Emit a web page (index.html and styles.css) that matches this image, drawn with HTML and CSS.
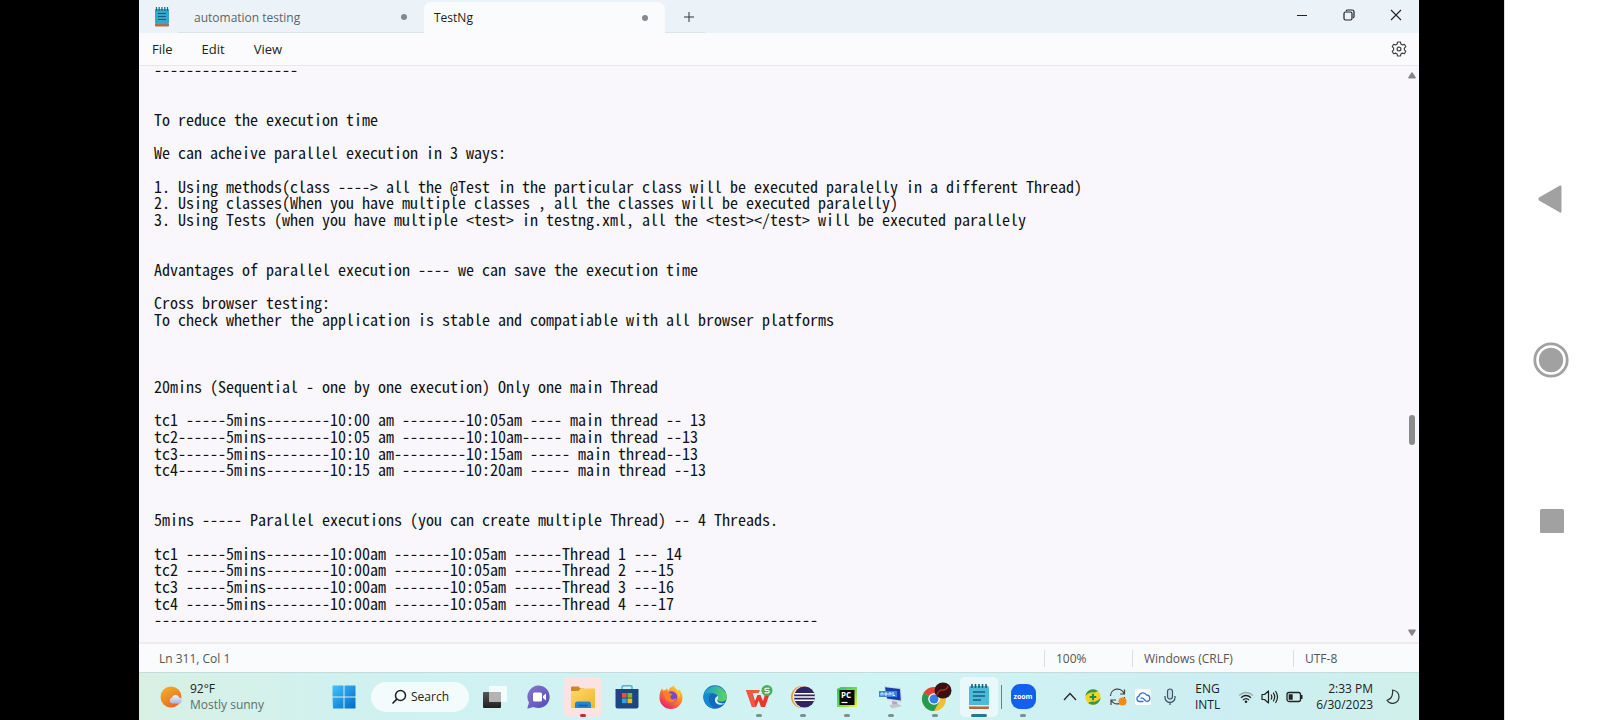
FILE: index.html
```html
<!DOCTYPE html>
<html lang="en">
<head>
<meta charset="utf-8">
<title>TestNg - Notepad</title>
<link rel="stylesheet" href="styles.css">
</head>
<body>
<div class="screen">
  <main class="desktop">
    <section class="notepad" aria-label="Notepad">
      <header class="titlebar">
        <svg class="app-icon" viewBox="0 0 14 20" aria-hidden="true"><rect x="0" y="2" width="14" height="15" rx="1" fill="#35a7ca"/><path d="M1.500 0v4M4.200 0v4M7 0v4M9.800 0v4M12.500 0v4" stroke="#176b8c" stroke-width="1.200"/><path d="M3 6.500h8M3 9.500h8M3 12.500h8" stroke="#135f80" stroke-width="1.200"/><path d="M0 17h14v1.500a1 1 0 0 1-1 1H1a1 1 0 0 1-1-1z" fill="#a5714f"/></svg>
        <div class="tabs" role="tablist">
          <button class="tab" role="tab" aria-selected="false"><span>automation testing</span><i class="dot"></i></button>
          <button class="tab tab-active" role="tab" aria-selected="true"><span>TestNg</span><i class="dot"></i></button>
          <button class="new-tab" aria-label="New tab"><svg width="12" height="12" viewBox="0 0 12 12"><path d="M6 1v10M1 6h10" stroke="#333" fill="none"/></svg></button>
        </div>
        <div class="window-buttons">
          <button aria-label="Minimize"><svg width="12" height="12" viewBox="0 0 12 12"><path d="M1 6.500h10" stroke="#222" fill="none"/></svg></button>
          <button aria-label="Restore"><svg width="12" height="12" viewBox="0 0 12 12"><g stroke="#222" fill="none" stroke-width="1.200"><rect x="1" y="3" width="8" height="8" rx="1.500"/><path d="M3 1.800Q3.600 1 4.500 1H9a2 2 0 0 1 2 2v4.500q0 .9-.8 1.500"/></g></svg></button>
          <button aria-label="Close"><svg width="12" height="12" viewBox="0 0 12 12"><path d="M1 1l10 10M11 1L1 11" stroke="#222" stroke-width="1.100" fill="none"/></svg></button>
        </div>
      </header>
      <nav class="menubar">
        <button>File</button><button>Edit</button><button>View</button>
        <button class="settings" aria-label="Settings"><svg width="16" height="16" viewBox="0 0 16 16"><g fill="none" stroke="#444" stroke-width="1.200" stroke-linejoin="round"><path d="M6.600 1h2.800l.5 2 1.500.9 2-.6 1.400 2.400L13.400 7.100v1.800l1.400 1.400-1.400 2.400-2-.6-1.500.9-.5 2H6.600l-.5-2-1.500-.9-2 .6-1.400-2.400 1.400-1.400V7.100L1.200 5.700l1.400-2.400 2 .6L6.100 3z"/><circle cx="8" cy="8" r="1.900"/></g></svg></button>
      </nav>
      <div class="editor">
        <div class="document" role="textbox" aria-multiline="true" aria-label="Document text" contenteditable="true" spellcheck="false"><p>------------------</p><p></p><p></p><p>To reduce the execution time</p><p></p><p>We can acheive parallel execution in 3 ways:</p><p></p><p>1. Using methods(class ----&gt; all the @Test in the particular class will be executed paralelly in a different Thread)</p><p>2. Using classes(When you have multiple classes , all the classes will be executed paralelly)</p><p>3. Using Tests (when you have multiple &lt;test&gt; in testng.xml, all the &lt;test&gt;&lt;/test&gt; will be executed parallely</p><p></p><p></p><p>Advantages of parallel execution ---- we can save the execution time</p><p></p><p>Cross browser testing:</p><p>To check whether the application is stable and compatiable with all browser platforms</p><p></p><p></p><p></p><p>20mins (Sequential - one by one execution) Only one main Thread</p><p></p><p>tc1 -----5mins--------10:00 am --------10:05am ---- main thread -- 13</p><p>tc2------5mins--------10:05 am --------10:10am----- main thread --13</p><p>tc3------5mins--------10:10 am---------10:15am ----- main thread--13</p><p>tc4------5mins--------10:15 am --------10:20am ----- main thread --13</p><p></p><p></p><p>5mins ----- Parallel executions (you can create multiple Thread) -- 4 Threads.</p><p></p><p>tc1 -----5mins--------10:00am -------10:05am ------Thread 1 --- 14</p><p>tc2 -----5mins--------10:00am -------10:05am ------Thread 2 ---15</p><p>tc3 -----5mins--------10:00am -------10:05am ------Thread 3 ---16</p><p>tc4 -----5mins--------10:00am -------10:05am ------Thread 4 ---17</p><p>-----------------------------------------------------------------------------------</p></div>
        <div class="scrollbar" aria-hidden="true">
          <svg width="8" height="7" viewBox="0 0 8 7"><path d="M3.200.8Q4-.2 4.800.8L7.800 5.500Q8 6.500 7 6.500H1Q0 6.500.2 5.500z" fill="#858585"/></svg>
          <i class="track-before"></i><i class="thumb"></i><i class="track-after"></i>
          <svg width="8" height="7" viewBox="0 0 8 7"><path d="M3.200 6.200Q4 7.200 4.800 6.200L7.800 1.500Q8 .5 7 .5H1Q0 .5.2 1.500z" fill="#858585"/></svg>
        </div>
      </div>
      <footer class="statusbar">
        <span class="position">Ln 311, Col 1</span><span class="zoom-level">100%</span><span class="line-ending">Windows (CRLF)</span><span class="encoding">UTF-8</span>
      </footer>
    </section>

    <footer class="taskbar">
      <button class="weather">
        <svg width="24" height="24" viewBox="0 0 24 24"><defs><linearGradient id="sun" x1="0" y1="0" x2=".6" y2="1"><stop offset="0" stop-color="#f2b52c"/><stop offset="1" stop-color="#ea6a1e"/></linearGradient><linearGradient id="cloud" x1="0" y1="0" x2="0" y2="1"><stop offset="0" stop-color="#eef2ff"/><stop offset="1" stop-color="#a9b6e8"/></linearGradient></defs><circle cx="11" cy="12" r="10.500" fill="url(#sun)"/><path d="M12 18.500a3 3 0 0 1-.2-5.800 4 4 0 0 1 7.400-.3 3.200 3.200 0 0 1 .8 6.100z" fill="url(#cloud)"/></svg>
        <span><b>92°F</b><small>Mostly sunny</small></span>
      </button>
      <div class="apps">
        <button class="app" aria-label="Start"><svg width="24" height="24" viewBox="0 0 24 24"><defs><linearGradient id="win" x1="0" y1="0" x2="1" y2="1"><stop offset="0" stop-color="#43c3f7"/><stop offset="1" stop-color="#0069ce"/></linearGradient></defs><path d="M1 .5h10.500V11.500H.5V1zM12.500.5H23.500V11.500H12.500zM.5 12.500h11v11H1zM12.500 12.500h11v11h-11z" fill="url(#win)"/></svg></button>
        <button class="search"><svg width="16" height="16" viewBox="0 0 16 16"><circle cx="9.500" cy="6.500" r="5" fill="none" stroke="#222" stroke-width="1.500"/><path d="M5.800 10.200L1.500 14.500" stroke="#222" stroke-width="1.700"/></svg>Search</button>
        <button class="app" aria-label="Task view"><svg width="24" height="24" viewBox="0 0 24 24"><defs><linearGradient id="tv" x1="0" y1="0" x2="0" y2="1"><stop offset="0" stop-color="#565656"/><stop offset="1" stop-color="#202020"/></linearGradient></defs><rect x="0" y="7" width="18" height="16" rx="1" fill="url(#tv)"/><rect x="6" y="1" width="18" height="16" rx="1" fill="#fff" opacity=".75"/><path d="M6 7h12v10H6z" fill="#a9a9a9" opacity=".75"/></svg></button>
        <button class="app" aria-label="Chat"><svg width="24" height="24" viewBox="0 0 24 24"><defs><linearGradient id="chat" x1="0" y1="0" x2="1" y2="1"><stop offset="0" stop-color="#8878cc"/><stop offset="1" stop-color="#5049bd"/></linearGradient></defs><path d="M12 .5A11.300 11.300 0 1 1 6.500 22L1 23.500Q.3 23.500.5 22.500L2 17.500A11.300 11.300 0 0 1 12 .5z" fill="url(#chat)"/><rect x="6" y="7.500" width="9" height="9" rx="1.500" fill="#fff"/><path d="M16 11l3-2.500v7L16 13z" fill="#fff"/></svg></button>
        <button class="app attention" aria-label="File Explorer"><svg width="26" height="24" viewBox="0 0 26 24"><defs><linearGradient id="fold" x1="0" y1="0" x2="1" y2="1"><stop offset="0" stop-color="#ffda6a"/><stop offset="1" stop-color="#f3b32c"/></linearGradient></defs><path d="M1 2.500a1 1 0 0 1 1-1h6.500l2 2H14V10H1z" fill="#c98c1c"/><path d="M1 6h7.500l2.200-2.500H24a1 1 0 0 1 1 1V22a1 1 0 0 1-1 1H2a1 1 0 0 1-1-1z" fill="url(#fold)"/><path d="M5 23v-4a2.500 2.500 0 0 1 2.500-2.500h11A2.500 2.500 0 0 1 21 19v4z" fill="#1b87d6"/><path d="M8.500 20.500h9" stroke="#125c9d" stroke-width="1.500"/></svg></button>
        <button class="app" aria-label="Microsoft Store"><svg width="24" height="24" viewBox="0 0 24 24"><path d="M7 5V2q0-1.200 1.200-1.200h7.600Q17 .8 17 2v3" fill="none" stroke="#43b8e5" stroke-width="1.500"/><path d="M.5 4h23v17.500a2 2 0 0 1-2 2h-19a2 2 0 0 1-2-2z" fill="#1d4680"/><path d="M7 8h4.700v4.700H7z" fill="#f05024"/><path d="M12.500 8h4.700v4.700h-4.700z" fill="#7fba25"/><path d="M7 13.500h4.700v4.700H7z" fill="#25a8e8"/><path d="M12.500 13.500h4.700v4.700h-4.700z" fill="#fdb914"/></svg></button>
        <button class="app" aria-label="Firefox"><svg width="24" height="24" viewBox="0 0 24 24"><defs><linearGradient id="ff" x1=".9" y1="0" x2=".2" y2="1"><stop offset="0" stop-color="#ffe33b"/><stop offset=".45" stop-color="#ff8a26"/><stop offset="1" stop-color="#e81572"/></linearGradient></defs><path d="M3 3.500l1 2 2.500-.5L8 3l1 3q2-4 6-5.500.5 3 3.500 4.500l1 1 .5-2Q23.500 8 23.500 13A11.500 11 0 0 1 .5 13Q.2 7.500 3 3.500z" fill="url(#ff)"/><circle cx="12.500" cy="12" r="5.700" fill="#7947cf"/><path d="M5 8q4-2 6.500.5l2.200.5-2.200 2q-.5 3 2 3.400 2.500 0 3.700-1.400-1 5-5.700 4.500Q6 16.500 5 8z" fill="#ff7f23"/><path d="M16 5q5 3 3.500 9 3.500-6-3.500-9z" fill="#ffe14a"/></svg></button>
        <button class="app" aria-label="Microsoft Edge"><svg width="24" height="24" viewBox="0 0 24 24"><defs><linearGradient id="ed" x1="0" y1=".3" x2="1" y2=".4"><stop offset="0" stop-color="#189bdc"/><stop offset="1" stop-color="#5cd65e"/></linearGradient></defs><circle cx="12" cy="12" r="11.700" fill="#1269bd"/><path d="M.5 11A11.700 11.700 0 0 1 23.700 11.500q0 5-5 5.200-4 0-4.200-1.700 1.500-2 .2-4.200-2-3-6.200-2.500Q3 8.500.5 11z" fill="url(#ed)"/><path d="M.4 11.500Q3 7 8.500 8q-3.500 3-2.700 7.500Q7 21 11.500 23.600A11.600 11.600 0 0 1 .4 11.500z" fill="#1589d2"/><path d="M14.800 10.800q-2.700 1.400-3 4 .2 5 6.200 5 2.200 0 4.700-2-2.600 1-5.500.3-3.500-1-2.700-3.300 1.300-1.800.3-4z" fill="#d1f1f0"/></svg></button>
        <button class="app running" aria-label="WPS Office"><svg width="28" height="26" viewBox="0 0 28 26"><path d="M1 6h5.500L10 17l2.500-6h3L18 17l3.500-11H26l-6 17h-4l-2.300-6.500L11 23H7z" fill="#e9382b"/><path d="M1 6h14l-1.500 3H7.200L11 23H7z" fill="#f2583c"/><circle cx="22" cy="6.500" r="5.500" fill="#4caf5c"/><path d="M24.500 4.200H21q-1.200 0-1.200 1.100t1.200 1.200h2q1.200 0 1.200 1.200T23 8.900h-3.400" fill="none" stroke="#fff" stroke-width="1.100"/></svg></button>
        <button class="app running" aria-label="Eclipse"><svg width="24" height="24" viewBox="0 0 24 24"><circle cx="11" cy="12" r="11" fill="#f19a32"/><circle cx="12.500" cy="12" r="10.800" fill="#e8eaf4"/><circle cx="13.500" cy="12" r="10.500" fill="#30255d"/><path d="M3.500 8.700h20M3 12h21M3.500 15.300h20" stroke="#fff" stroke-width="1.500"/></svg></button>
        <button class="app running" aria-label="PyCharm"><svg width="22" height="22" viewBox="0 0 22 22"><defs><linearGradient id="py" x1="0" y1="0" x2="1" y2="1"><stop offset="0" stop-color="#21c96b"/><stop offset=".5" stop-color="#6cdb4a"/><stop offset="1" stop-color="#f5f04a"/></linearGradient></defs><path d="M1 3l4-2h16v20H1z" fill="url(#py)"/><path d="M3.500 4h15v15h-15z" fill="#080808"/><text x="5" y="12" class="pc-label">PC</text><path d="M5.500 16.500h6" stroke="#fff" stroke-width="1.200"/></svg></button>
        <button class="app running" aria-label="Remote computers"><svg width="26" height="24" viewBox="0 0 26 24"><path d="M6 1l17 2 1 14-15-2z" fill="#d5d8df"/><path d="M7 2.200l15 1.700.8 11.500L9 13.500z" fill="#1c3bab"/><path d="M14 16l5 .7.500 3h-5z" fill="#a8abb2"/><path d="M11 20l9-1 4 2-10 2.500z" fill="#c4c5ca"/><path d="M1 6h18v6H1z" fill="#3985dc"/><path d="M3 10.500V8h2v2.500M7 8h2v2H7zM11 10.500V8h2v2.500M15 7v3.500h2" stroke="#e6f3ff" fill="none"/></svg></button>
        <button class="app running" aria-label="Google Chrome"><svg width="34" height="30" viewBox="0 0 34 30"><circle cx="16" cy="17" r="12" fill="#eec22e"/><path d="M16 17L5.600 11A12 12 0 0 1 26.400 11z" fill="#df4537"/><path d="M16 17L5.600 11A12 12 0 0 0 16 29l5-9z" fill="#269b50"/><circle cx="16" cy="17" r="5.800" fill="#fff"/><circle cx="16" cy="17" r="4.500" fill="#377ee9"/><ellipse cx="25" cy="8.500" rx="8.500" ry="8" fill="#391210"/><path d="M19 13q1-5 6-5 4 0 5-4" fill="none" stroke="#a72e2d" stroke-width="1.300"/></svg></button>
        <button class="app active" aria-label="Notepad"><svg width="20" height="26" viewBox="0 0 20 26"><rect x="0" y="2" width="20" height="20" rx="1.500" fill="#4eb9d9"/><path d="M3 0v4M6.500 0v4M10 0v4M13.500 0v4M17 0v4" stroke="#215a70" stroke-width="1.600"/><path d="M4 8h12M4 12h12M4 16h8" stroke="#145f80" stroke-width="1.500"/><path d="M0 21h20v3a1 1 0 0 1-1 1H1a1 1 0 0 1-1-1z" fill="#b66538"/><path d="M0 21h20v1.500H0z" fill="#f5e8d8"/></svg></button>
        <button class="app running" aria-label="Zoom"><span class="zoom-icon">zoom</span></button>
      </div>
      <div class="tray">
        <button aria-label="Show hidden icons"><svg width="14" height="16" viewBox="0 0 14 16"><path d="M1 11l6-6.500L13 11" fill="none" stroke="#222" stroke-width="1.200"/></svg></button>
        <button aria-label="Antivirus"><svg width="16" height="16" viewBox="0 0 16 16"><circle cx="8" cy="8" r="7.700" fill="#f1d329"/><path d="M.5 7A7.700 7.700 0 0 1 13 2L9.500 3.500Q4.500 2.500.5 7zM15.500 9A7.700 7.700 0 0 1 3 14l3.500-1.500q5 1 9-3.500z" fill="#36984b"/><path d="M8 4.700v6.600M4.700 8h6.600" stroke="#278c3d" stroke-width="2"/></svg></button>
        <button aria-label="Updates"><svg width="18" height="18" viewBox="0 0 18 18"><path d="M1.500 8A7 7 0 0 1 15 5.500M15.500 1.500v4.500H11M15.500 9A7 7 0 0 1 2.500 12.500M2 17v-5h5" fill="none" stroke="#444" stroke-width="1.200"/><circle cx="13.500" cy="13.500" r="4" fill="#f58b14"/></svg></button>
        <button class="cloud-tile" aria-label="Cloud drive"><svg width="16" height="16" viewBox="0 0 16 16"><path d="M8.500 12.500H4.300A2.700 2.700 0 0 1 4 7.200 4 4 0 0 1 11.500 6a3.300 3.300 0 0 1 .8 6.500q-1.300 0-2-1L8 9.300q-1.200-1-2.300.2" fill="none" stroke="#3c6edb" stroke-width="1.300"/></svg></button>
        <button class="mic" aria-label="Microphone"><svg width="12" height="18" viewBox="0 0 12 18"><rect x="3.500" y="1" width="5" height="10" rx="2.500" fill="#c4dde7" stroke="#3b5967" stroke-width="1.200"/><path d="M1 8v1.500a5 5 0 0 0 10 0V8M6 14.500V17" fill="none" stroke="#3b5967" stroke-width="1.300"/></svg></button>
        <button class="language">ENG<br>INTL</button>
        <button class="system" aria-label="Network, volume and battery">
          <svg width="16" height="16" viewBox="0 0 16 16"><g fill="none" stroke="#222" stroke-width="1.300"><path d="M1 6.500q7-6 14 0" stroke="#92adb0"/><path d="M3 8.700q5-4.400 10 0M5 11q3-2.800 6 0"/></g><circle cx="8" cy="12.700" r="1.300" fill="#222"/></svg>
          <svg width="18" height="16" viewBox="0 0 18 16"><path d="M1 5.500h2.500L7.500 2v12l-4-3.500H1zM10 5.500q1.700 2.500 0 5M12.200 3.700q3 4.300 0 8.600M14.500 2q4 6 0 12" fill="none" stroke="#222" stroke-width="1.200" stroke-linejoin="round"/></svg>
          <svg width="18" height="16" viewBox="0 0 18 16"><rect x="1" y="3.500" width="13.500" height="9" rx="2" fill="none" stroke="#222" stroke-width="1.300"/><path d="M2.700 5.200h4v5.600h-4zM15 6h1.500v4H15z" fill="#222"/></svg>
        </button>
        <button class="clock">2:33 PM<br>6/30/2023</button>
        <button aria-label="Notifications"><svg width="14" height="16" viewBox="0 0 14 16"><path d="M6.500 1q6.500 1 6.500 7a6.500 6.500 0 0 1-12 3.300Q7.500 9.500 6.500 1z" fill="none" stroke="#333" stroke-width="1.200" stroke-linejoin="round"/></svg></button>
      </div>
    </footer>
  </main>
  <nav class="phone-nav" aria-label="Device navigation">
    <button aria-label="Back"><svg width="36" height="36" viewBox="0 0 36 36"><path d="M6 16.500L27 4.500q1.500-.5 1.500 1v25q0 1.500-1.500 1L6 19.500Q4.500 18 6 16.500z" fill="#a1a1a1"/></svg></button>
    <button aria-label="Home"><svg width="36" height="36" viewBox="0 0 36 36"><circle cx="18" cy="18" r="16.200" fill="none" stroke="#a1a1a1" stroke-width="2.800"/><circle cx="18" cy="18" r="12.200" fill="#a1a1a1"/></svg></button>
    <button aria-label="Recent apps"><svg width="36" height="36" viewBox="0 0 36 36"><rect x="7" y="6" width="24" height="24" rx="1.500" fill="#a1a1a1"/></svg></button>
  </nav>
</div>
</body>
</html>
```
FILE: styles.css
```css
* { box-sizing: border-box; }

body {
  margin: 0;
  background: #000;
  font-family: "Open Sans", "Noto Sans", sans-serif;
  font-size: 12px;
  color: #222;
}

button {
  margin: 0;
  padding: 0;
  border: 0;
  background: none;
  font: inherit;
  color: inherit;
}

svg { display: block; flex: none; }

.screen {
  display: flex;
  justify-content: space-between;
  height: 100vh;
}

.desktop {
  flex: 1;
  display: flex;
  flex-direction: column;
  min-width: 0;
  margin: 0 85px 0 139px;
}

.notepad {
  flex: 1;
  display: flex;
  flex-direction: column;
  min-height: 0;
  background: #f9f7fb;
}

/* Title bar */
.titlebar {
  display: flex;
  flex: none;
  height: 33px;
  background: #ebf3f9;
}

.app-icon {
  width: 14px;
  height: 20px;
  margin: 7px 9px 0 16px;
}

.tabs {
  display: flex;
  flex: 1;
  padding-top: 2px;
}

.tab {
  display: flex;
  align-items: center;
  justify-content: space-between;
  width: 246px;
  padding: 0 17px 0 16px;
  border-bottom: 1px solid #dbe5e8;
  color: #5f6467;
}

.tab-active {
  width: 241px;
  padding: 0 17px 0 10px;
  border: 0;
  border-radius: 7px 7px 0 0;
  background: #fafbfd;
  color: #1c1c1c;
}

.dot {
  width: 6px;
  height: 6px;
  border-radius: 50%;
  background: #86898b;
}

.new-tab {
  display: grid;
  place-items: center;
  width: 40px;
  padding-left: 8px;
  border-bottom: 1px solid #dbe5e8;
}

.window-buttons {
  display: flex;
}

.window-buttons button {
  display: grid;
  place-items: center;
  width: 47px;
  height: 29px;
}

/* Menu */
.menubar {
  display: flex;
  flex: none;
  align-items: center;
  gap: 29px;
  height: 33px;
  padding: 0 12px 0 13px;
  border-bottom: 1px solid #e8e7eb;
  background: #fbfbfd;
  font-size: 13px;
}

.settings { margin-left: auto; }

/* Document */
.editor {
  flex: 1;
  display: flex;
  min-height: 0;
  overflow: hidden;
}

.document {
  flex: 1;
  display: grid;
  grid-auto-rows: minmax(0, 1fr);
  min-width: 0;
  margin: -5px 0 14px;
  padding-left: 15px;
  outline: 0;
  font-family: "Noto Sans Mono CJK SC", "Liberation Mono", monospace;
  font-size: 16px;
  line-height: 16px;
  color: #111;
  white-space: pre;
}

.document p { margin: 0; }

.scrollbar {
  display: flex;
  flex-direction: column;
  align-items: center;
  width: 14px;
  padding: 6px 0;
}

.thumb {
  width: 6px;
  height: 30px;
  border-radius: 3px;
  background: #8b8b8b;
}

.track-before { flex: 336; }
.track-after { flex: 184; }

/* Status bar */
.statusbar {
  display: flex;
  flex: none;
  align-items: center;
  height: 30px;
  border-top: 2px solid #ececef;
  background: #f9fbfd;
  color: #555;
}

.position { flex: 1; padding-left: 20px; }

.zoom-level,
.line-ending,
.encoding {
  padding-left: 11px;
  border-left: 1px solid #dcdfe1;
}

.zoom-level { width: 88px; }
.line-ending { width: 161px; }
.encoding { width: 126px; }

/* Taskbar */
.taskbar {
  display: flex;
  flex: none;
  align-items: center;
  height: 48px;
  border-top: 1px solid #c6dcdc;
  background: linear-gradient(90deg, #d8f0e4 0, #cff1f1 20%, #d0f3f3 60%, #cceef2 85%, #d0f0ea 100%);
}

.weather {
  display: flex;
  align-items: center;
  gap: 6px;
  width: 183px;
  padding-left: 21px;
  line-height: 16px;
  text-align: left;
}

.weather b,
.weather small {
  display: block;
  font-size: 12px;
  font-weight: 400;
}

.weather small { color: #5d6f6d; }

.apps {
  display: flex;
  align-items: center;
}

.app {
  position: relative;
  display: grid;
  place-items: center;
  width: 44px;
  height: 40px;
}

.search {
  display: flex;
  align-items: center;
  justify-content: center;
  gap: 4px;
  width: 98px;
  height: 30px;
  margin: 0 4px 0 5px;
  border-radius: 15px;
  background: #f3fbfc;
}

.running::after,
.attention::after,
.active::after {
  content: "";
  position: absolute;
  bottom: 0;
  left: 50%;
  width: 6px;
  height: 3px;
  margin-left: -3px;
  border-radius: 2px;
  background: #7c9090;
}

.attention {
  width: 38px;
  margin: 0 3px;
  border-radius: 5px;
  background: #fbe3e4;
}

.attention::after { background: #b8322c; }

.active {
  width: 38px;
  margin: 0 3px;
  border-radius: 5px;
  background: #e9f8fa;
}

.active::before {
  content: "";
  position: absolute;
  top: 8px;
  right: -4px;
  width: 1px;
  height: 24px;
  background: #6c8082;
}

.active::after {
  width: 16px;
  margin-left: -8px;
  background: #24798b;
}

.pc-label {
  font: 700 8px "Open Sans", sans-serif;
  fill: #fff;
}

.zoom-icon {
  display: grid;
  place-items: center;
  width: 25px;
  height: 25px;
  border-radius: 9px;
  background: #1260f0;
  color: #fff;
  font-size: 7px;
  font-weight: 700;
}

.tray {
  display: flex;
  align-items: center;
  gap: 8px;
  margin-left: auto;
  padding-right: 19px;
  line-height: 16px;
}

.cloud-tile {
  border-radius: 2px;
  background: #fff;
}

.mic { margin: 0 11px 0 5px; }
.language { text-align: center; }

.system {
  display: flex;
  gap: 7px;
  margin: 0 4px 0 10px;
}

.clock { margin-right: 5px; text-align: right; }

/* Device navigation */
.phone-nav {
  display: flex;
  flex-direction: column;
  justify-content: center;
  align-items: center;
  gap: 125px;
  width: 96px;
  padding-right: 3px;
  border-left: 1px solid #ddd;
  background: #fff;
}
```
